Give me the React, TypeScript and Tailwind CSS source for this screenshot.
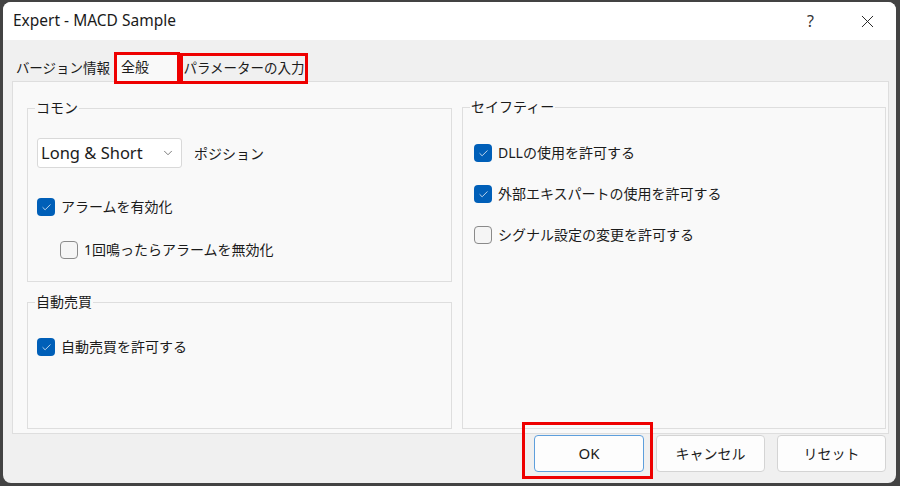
import { Check, ChevronDown, X } from "lucide-react";

const font = "font-['Noto_Sans','Noto_Sans_CJK_JP',sans-serif]";

function CheckBox({ checked, label }: { checked: boolean; label: string }) {
  return (
    <div className="flex items-center h-[18px] gap-[6px]">
      {checked ? (
        <span className="w-[18px] h-[18px] rounded-[4px] bg-[#005fb8] flex items-center justify-center shrink-0">
          <Check className="w-[11px] h-[11px] text-white" strokeWidth={1.6} />
        </span>
      ) : (
        <span className="w-[18px] h-[18px] rounded-[4px] border border-[#8a8a8a] bg-[#f5f5f5] shrink-0" />
      )}
      <span className="text-[14px] leading-[18px] text-[#1b1b1b] whitespace-nowrap">{label}</span>
    </div>
  );
}

function Group({ title, className, children }: { title: string; className: string; children: React.ReactNode }) {
  return (
    <div className={`relative border border-[#dedede] ${className}`}>
      {/* legend sits on top of the frame line */}
      <span className="absolute left-[7px] -top-[11px] px-[1px] bg-[#f9f9f9] text-[14px] leading-[20px] text-[#1b1b1b]">
        {title}
      </span>
      {children}
    </div>
  );
}

export default function App() {
  return (
    <div className={`w-[900px] h-[486px] bg-[#434343] pt-[2px] pl-[3px] pr-[4px] pb-[3px] ${font}`}>
      <div className="w-full h-full rounded-[8px] bg-[#f0f0f0] overflow-hidden flex flex-col">
        {/* Title bar */}
        <div className="h-[38px] bg-white flex items-center shrink-0">
          <span className="pl-[10px] text-[15.5px] text-[#1a1a1a]">Expert - MACD Sample</span>
          <span className="ml-auto mr-[43px] text-[16px] text-[#333]">?</span>
          <X className="w-[21px] h-[21px] mr-[18px] text-[#222]" strokeWidth={1.1} />
        </div>

        {/* Body */}
        <div className="flex-1 flex flex-col pl-[9px] pr-[7px] pt-[12px]">
          {/* Tabs */}
          <div className="flex items-end h-[30px]">
            <div className="w-[102px] h-[27px] flex items-center justify-center text-[13.5px] text-[#1b1b1b]">
              バージョン情報
            </div>
            <div className="relative w-[66px] h-[30px] bg-[#f9f9f9] border border-b-0 border-[#dedede] flex items-start pt-[3px] pl-[6px] text-[14px] text-[#1b1b1b]">
              全般
              <span className="absolute -left-[1px] -top-[1px] -right-[1px] -bottom-[2px] border-[3px] border-[#ee0000]" />
            </div>
            <div className="relative w-[128px] h-[27px] flex items-center justify-center text-[13.5px] text-[#1b1b1b]">
              パラメーターの入力
              <span className="absolute left-0 -top-[2px] right-0 -bottom-[2px] border-[3px] border-[#ee0000]" />
            </div>
          </div>

          {/* Tab panel */}
          <div className="h-[353px] -mt-px bg-[#f9f9f9] border border-[#dedede] flex gap-[10px] pl-[14px] pr-[2px]">
            <div className="w-[425px] flex flex-col pt-[26px]">
              <Group title="コモン" className="h-[174px] pt-[29px] pl-[9px]">
                <div className="flex items-center gap-[12px]">
                  <div className="w-[145px] h-[30px] bg-white border border-[#d9d9d9] rounded-[3px] flex items-center pl-[3px] pr-[6px]">
                    <span className="text-[16.5px] text-[#1b1b1b]">Long &amp; Short</span>
                    <ChevronDown className="ml-auto w-[14px] h-[14px] text-[#555]" strokeWidth={1.3} />
                  </div>
                  <span className="text-[14px] text-[#1b1b1b]">ポジション</span>
                </div>
                <div className="mt-[30px]">
                  <CheckBox checked label="アラームを有効化" />
                </div>
                <div className="mt-[25px] pl-[23px]">
                  <CheckBox checked={false} label="1回鳴ったらアラームを無効化" />
                </div>
              </Group>
              <Group title="自動売買" className="mt-[20px] h-[127px] pt-[35px] pl-[9px]">
                <CheckBox checked label="自動売買を許可する" />
              </Group>
            </div>
            <div className="flex-1 flex flex-col pt-[25px]">
              <Group title="セイフティー" className="h-[322px] pt-[36px] pl-[11px] flex flex-col gap-[23px]">
                <CheckBox checked label="DLLの使用を許可する" />
                <CheckBox checked label="外部エキスパートの使用を許可する" />
                <CheckBox checked={false} label="シグナル設定の変更を許可する" />
              </Group>
            </div>
          </div>

          {/* Buttons */}
          <div className="flex justify-end gap-[12px] mt-px pr-[3px]">
            <div className="relative">
              <button className="w-[110px] h-[37px] bg-[#fdfdfd] border border-[#5e9fdc] rounded-[4px] text-[15px] text-[#1b1b1b]">
                OK
              </button>
              <span className="absolute -left-[12px] -top-[13px] -right-[9px] -bottom-[7px] border-[3px] border-[#ee0000]" />
            </div>
            <button className="w-[109px] h-[37px] bg-[#fdfdfd] border border-[#d4d4d4] rounded-[4px] text-[14px] text-[#1b1b1b]">
              キャンセル
            </button>
            <button className="w-[109px] h-[37px] bg-[#fdfdfd] border border-[#d4d4d4] rounded-[4px] text-[14px] text-[#1b1b1b]">
              リセット
            </button>
          </div>
        </div>
      </div>
    </div>
  );
}
